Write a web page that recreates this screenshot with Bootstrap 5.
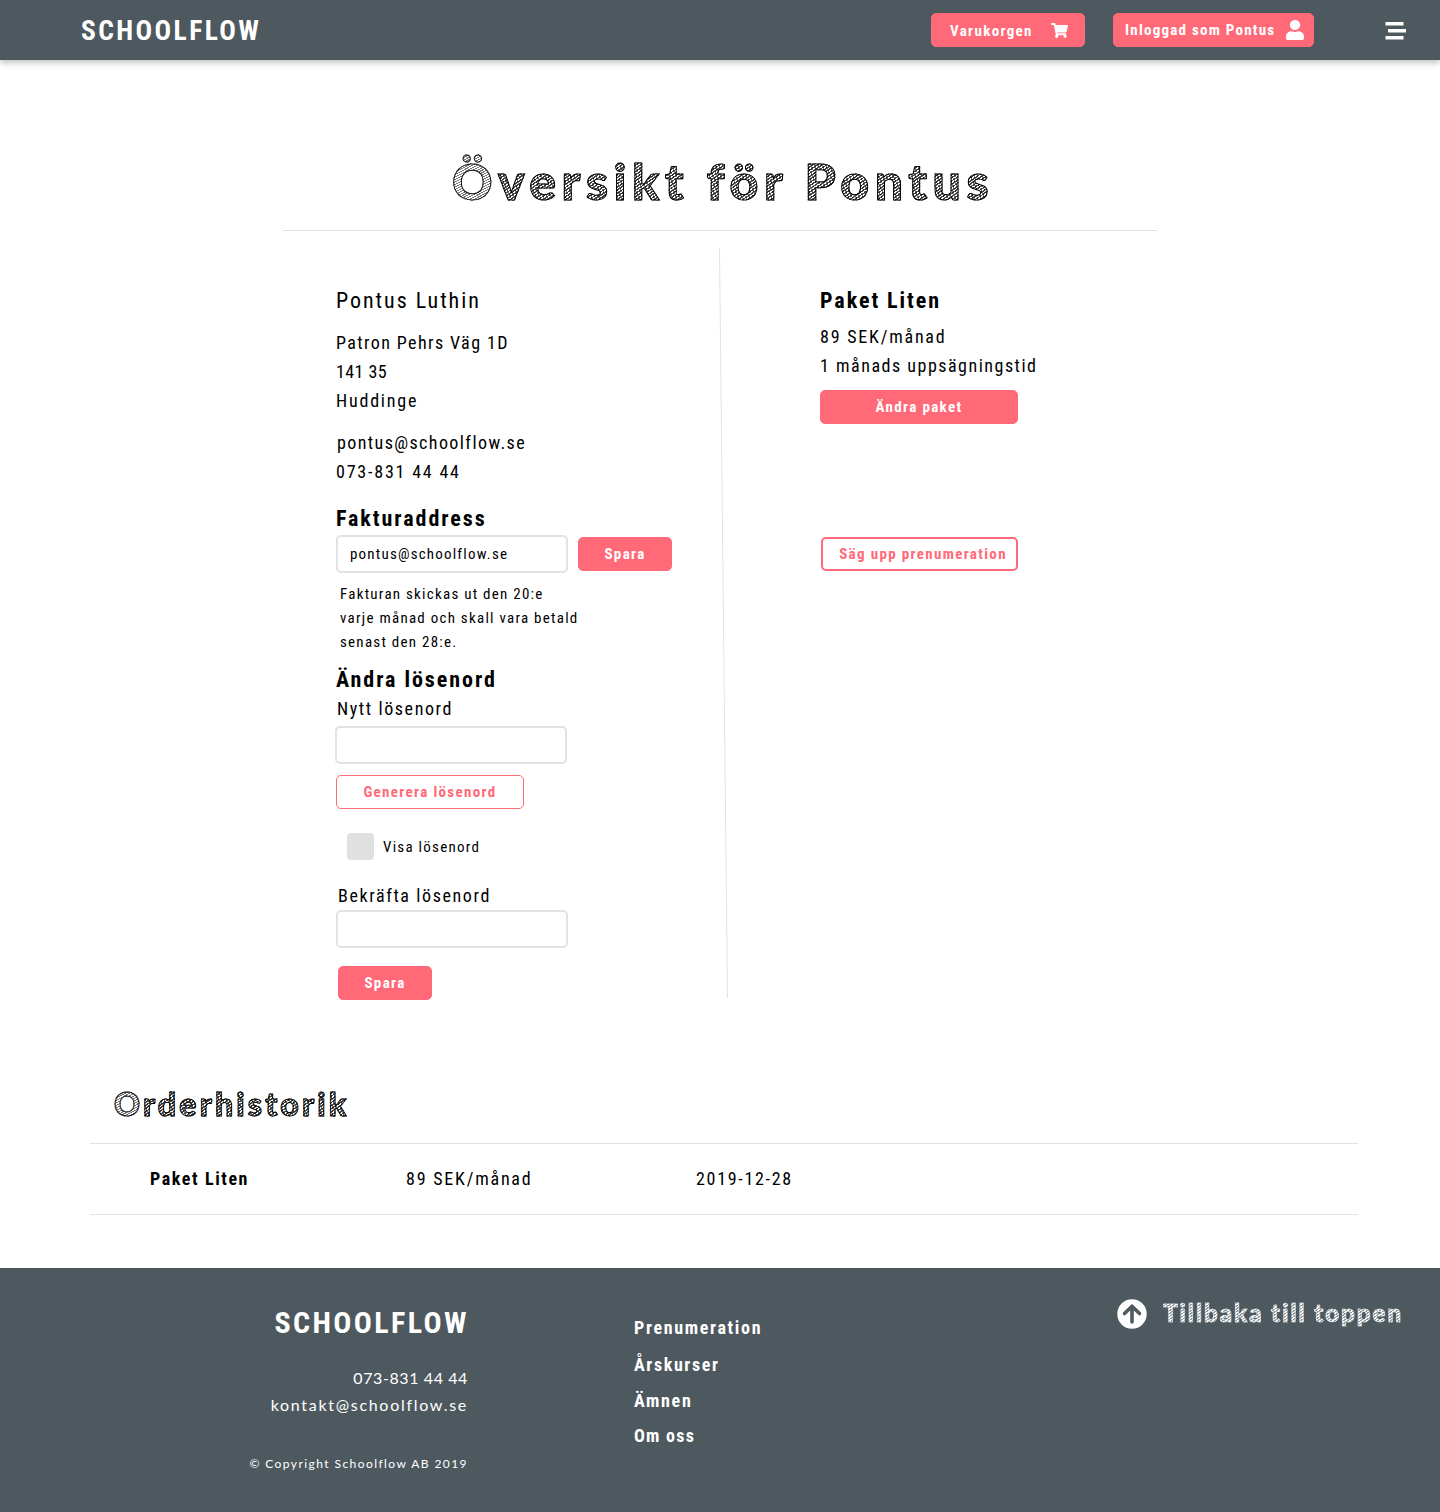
<!DOCTYPE html>
<html lang="sv">
<head>
<meta charset="utf-8">
<meta name="viewport" content="width=device-width, initial-scale=1">
<title>Schoolflow – Översikt</title>
<link href="https://cdn.jsdelivr.net/npm/bootstrap@5.3.0/dist/css/bootstrap.min.css" rel="stylesheet">
<style>
:root{--slate:#4e595f;--coral:#ff6978;--line:#e2e2e2}
body{font-family:Roboto,"Liberation Sans",sans-serif;font-stretch:85%;color:#000;background:#fff}
p,h1,h2{margin:0}
/* tracking steps */
.ls-5{letter-spacing:.4px}.ls-12{letter-spacing:1.25px}.ls-13{letter-spacing:1.25px}.ls-14{letter-spacing:1.4px}.ls-15{letter-spacing:1.5px}
.ls-16{letter-spacing:1.6px}.ls-17{letter-spacing:1.68px}.ls-18{letter-spacing:1.78px}
/* top bar */
.topbar{height:60px;background:var(--slate);box-shadow:0 3px 6px rgba(0,0,0,.24);padding:0 34px 0 81px}
.brand{font-size:27.5px;line-height:34px;font-weight:700;color:#fff;letter-spacing:2.4px;padding-top:2px}
.btn{--bs-btn-padding-x:0;--bs-btn-padding-y:0;--bs-btn-border-radius:5px;--bs-btn-font-size:15px;--bs-btn-font-weight:700;--bs-btn-line-height:24px;height:34px;display:flex;align-items:center;justify-content:center;font-stretch:85%;letter-spacing:1.35px}
.btn-coral{--bs-btn-bg:var(--coral);--bs-btn-color:#fff;--bs-btn-border-color:var(--coral);--bs-btn-hover-bg:#f0596a;--bs-btn-hover-color:#fff}
.btn-line{--bs-btn-bg:#fff;--bs-btn-color:var(--coral);--bs-btn-border-color:var(--coral);--bs-btn-hover-bg:var(--coral);--bs-btn-hover-color:#fff}
.btn-line-thick{--bs-btn-border-width:2px}
.btn-cart{width:154px;justify-content:space-between;padding:1px 16px 0 18px;margin-right:28px}
.btn-user{width:201px;justify-content:space-between;padding:0 9.5px 0 11px;letter-spacing:1.25px}
.menu-icon{margin:1px 0 0 71px}
.btn-save{width:94px;flex:none}.btn-plan{width:198px;margin-top:10px}.btn-generate{width:188px;margin-top:11px}
.btn-cancel{width:197px;padding-left:7px;margin:113px 0 0 1px;letter-spacing:1.35px}
/* hatched chalk lettering */
.sketch{font-family:Lato,"Open Sans",sans-serif;font-weight:900;font-stretch:100%;color:transparent;-webkit-text-stroke:1px #000;
background:repeating-linear-gradient(64deg,transparent 0 2.3px,rgba(0,0,0,.5) 2.3px 3.3px),repeating-linear-gradient(-34deg,#fff 0 1.3px,#444 1.3px 2.6px);-webkit-background-clip:text;background-clip:text}
.sketch-pale{color:transparent;-webkit-text-stroke:1px #111;background:repeating-linear-gradient(-28deg,#fff 0 1.2px,#777 1.2px 2.2px);-webkit-background-clip:text;background-clip:text}
.sketch-light{font-size:24px;line-height:32px;letter-spacing:2px;-webkit-text-stroke:.6px #dfe2e3;background:repeating-linear-gradient(-34deg,#fff 0 1.2px,#8d959a 1.2px 2.4px);-webkit-background-clip:text;background-clip:text}
/* overview */
.page{width:874px}
.title-rule{border-bottom:1px solid var(--line);padding:91px 0 19px}
.page-title{font-size:50px;line-height:60px;letter-spacing:5.5px;padding-left:6px}
.col-left{width:384px;padding:55px 0 0 53px}
.col-right{padding:55px 0 0 91px}
.divider{margin:17px 0 0 52px}
.t22{font-size:22px;line-height:30px;letter-spacing:1.95px}
.t18{font-size:18px;line-height:29px}
.t15{font-size:15px;line-height:24px}
.field{flex:none;width:232px;height:38px;border:2px solid var(--line);border-radius:5px;padding:0 12px;font-size:15px;color:#000;font-stretch:85%;letter-spacing:1.2px}
.address{margin-top:12px}
.contact{margin-top:13px}
.mail{padding-left:1px}
.head-invoice{margin-top:18px}
.invoice-row{margin-top:1px;gap:10px}
.note{margin:9px 0 0 4px}
.head-password{margin-top:11px;line-height:29px}
.label-new{padding-left:1px}
.field-new{margin:3px 0 0 -1px}
.tick-row{margin-top:24px}
.tick{width:27px;height:27px;border:0;border-radius:5px;background-color:#e0e0e0;margin:0 9px 0 11px}
.label-confirm{margin-top:21px;padding-left:2px}
.btn-confirm{margin:18px 0 0 2px}
.plan-info{margin-top:6px}
/* order history */
.orders{width:1268px;margin:83px 0 0 90px}
.orders h2{font-size:32px;line-height:40px;padding:1px 0 19px 24px;letter-spacing:3.2px}
.order-row{height:72px;border-top:1px solid var(--line);border-bottom:1px solid var(--line);padding:0 0 1px 60px}
.cell-name{width:256px}.cell-price{width:290px}
/* footer */
.foot{margin-top:53px;height:244px;background:var(--slate);color:#fff}
.foot-contact{width:468px;padding-top:35px}
.foot-brand{font-size:30px;line-height:36px;letter-spacing:2.4px;margin-right:-1px}
.foot-contact .info{font-family:Lato,sans-serif;font-size:16px;line-height:27px;margin-top:23px}
.foot-contact .copy{font-family:Lato,sans-serif;font-size:12px;line-height:18px;margin-top:37px;letter-spacing:1.43px}
.ls-phone{letter-spacing:.6px}.ls-mail{letter-spacing:1.7px}
.foot-nav{padding:42px 0 0 166px;font-size:18px;font-weight:700}
.foot-nav a{color:#fff;text-decoration:none;line-height:36px;display:block}
.foot-nav a:first-child{margin-bottom:1px}
.foot-nav a:nth-child(3){margin-bottom:-1px}
.to-top{margin:29px 37px 0 auto;height:32px;text-decoration:none}
.to-top svg{margin:2px 16px 0 0}
</style>
</head>
<body>
<nav class="topbar d-flex align-items-center">
  <a class="brand text-decoration-none me-auto" href="#">SCHOOLFLOW</a>
  <a class="btn btn-coral btn-cart" href="#"><span>Varukorgen</span>
    <svg width="17" height="15" viewBox="0 0 576 512" fill="#fff"><path d="M528.1 301.3l47.3-208C578.8 78.3 567.4 64 552 64H159.2l-9.2-44.8C147.8 8 137.9 0 126.5 0H24C10.7 0 0 10.7 0 24v16c0 13.3 10.7 24 24 24h69.9l70.2 343.4C147.3 417.1 136 435.2 136 456c0 30.9 25.1 56 56 56s56-25.1 56-56c0-15.7-6.4-29.8-16.8-40h209.6C430.4 426.2 424 440.3 424 456c0 30.9 25.1 56 56 56s56-25.1 56-56c0-22.2-12.9-41.3-31.6-50.4l5.5-24.3c3.4-15-8-29.3-23.4-29.3H218.1l-6.5-32h293.1c11.2 0 20.9-7.8 23.4-18.7z"/></svg></a>
  <a class="btn btn-coral btn-user" href="#"><span>Inloggad som Pontus</span>
    <svg width="18" height="20" viewBox="0 0 448 512" fill="#fff" preserveAspectRatio="none"><path d="M224 256c70.7 0 128-57.3 128-128S294.7 0 224 0 96 57.3 96 128s57.3 128 128 128zm89.6 32h-16.7c-22.2 10.2-46.9 16-72.9 16s-50.6-5.8-72.9-16h-16.7C60.2 288 0 348.2 0 422.4V464c0 26.5 21.5 48 48 48h352c26.5 0 48-21.5 48-48v-41.6c0-74.2-60.2-134.4-134.4-134.4z"/></svg></a>
  <svg class="menu-icon" width="21" height="18" viewBox="0 0 21 18" fill="#fff"><path d="M.5 0h18v3.5H.5zM3 7h18v3.5H3zM.5 14h18v3.5H.5z"/></svg>
</nav>

<main>
  <div class="page mx-auto">
    <div class="title-rule text-center">
      <h1 class="page-title sketch"><span class="sketch-pale">Ö</span>versikt för Pontus</h1>
    </div>
    <div class="d-flex align-items-start">
      <section class="col-left">
        <p class="t22">Pontus Luthin</p>
        <p class="t18 address"><span class="ls-14">Patron Pehrs Väg 1D</span><br><span class="ls-5">141 35</span><br><span class="ls-18">Huddinge</span></p>
        <p class="t18 contact"><span class="mail ls-14">pontus@schoolflow.se</span><br><span class="ls-18">073-831 44 44</span></p>
        <h2 class="t22 fw-bold head-invoice">Fakturaddress</h2>
        <div class="d-flex align-items-center invoice-row">
          <input class="field" type="text" value="pontus@schoolflow.se" aria-label="Fakturaddress">
          <button class="btn btn-coral btn-save" type="button">Spara</button>
        </div>
        <p class="t15 note ls-12">Fakturan skickas ut den 20:e<br>varje månad och skall vara betald<br>senast den 28:e.</p>
        <h2 class="t22 fw-bold head-password">Ändra lösenord</h2>
        <p class="t18 ls-16 label-new">Nytt lösenord</p>
        <input class="field field-new d-block" type="password" aria-label="Nytt lösenord">
        <button class="btn btn-line btn-generate" type="button">Generera lösenord</button>
        <div class="tick-row d-flex align-items-center">
          <input class="form-check-input tick" type="checkbox" id="visa">
          <label class="t15 ls-12" for="visa">Visa lösenord</label>
        </div>
        <p class="t18 ls-16 label-confirm">Bekräfta lösenord</p>
        <input class="field d-block" type="password" aria-label="Bekräfta lösenord">
        <button class="btn btn-coral btn-save btn-confirm" type="button">Spara</button>
      </section>
      <svg class="divider" width="10" height="751" viewBox="0 0 10 751"><path d="M.5 0L8.5 750" stroke="#e2e2e2"/></svg>
      <section class="col-right">
        <h2 class="t22 fw-bold">Paket Liten</h2>
        <p class="t18 plan-info"><span class="ls-18">89 SEK/månad</span><br><span class="ls-15">1 månads uppsägningstid</span></p>
        <button class="btn btn-coral btn-plan" type="button">Ändra paket</button>
        <button class="btn btn-line btn-line-thick btn-cancel" type="button">Säg upp prenumeration</button>
      </section>
    </div>
  </div>

  <section class="orders">
    <h2 class="sketch"><span class="sketch-pale">O</span>rderhistorik</h2>
    <div class="order-row t18 d-flex align-items-center">
      <span class="cell-name fw-bold ls-16">Paket Liten</span>
      <span class="cell-price ls-18">89 SEK/månad</span>
      <span class="ls-17">2019-12-28</span>
    </div>
  </section>
</main>

<footer class="foot d-flex align-items-start">
  <div class="foot-contact text-end">
    <div class="brand foot-brand">SCHOOLFLOW</div>
    <div class="info"><div class="ls-phone">073-831 44 44</div><div class="ls-mail">kontakt@schoolflow.se</div></div>
    <div class="copy">© Copyright Schoolflow AB 2019</div>
  </div>
  <nav class="foot-nav">
    <a class="ls-17" href="#">Prenumeration</a>
    <a class="ls-16" href="#">Årskurser</a>
    <a class="ls-17" href="#">Ämnen</a>
    <a class="ls-13" href="#">Om oss</a>
  </nav>
  <a class="to-top d-flex align-items-center" href="#">
    <svg width="30" height="30" viewBox="0 0 30 30"><circle cx="15" cy="15" r="14.7" fill="#fff"/><path d="M15 23V8M7.5 14.5L15 7.2l7.5 7.3" fill="none" stroke="#4e595f" stroke-width="3.6" stroke-linecap="round" stroke-linejoin="round"/></svg>
    <span class="sketch sketch-light">Tillbaka till toppen</span>
  </a>
</footer>
<script src="https://cdn.jsdelivr.net/npm/bootstrap@5.3.0/dist/js/bootstrap.bundle.min.js"></script>
</body>
</html>
